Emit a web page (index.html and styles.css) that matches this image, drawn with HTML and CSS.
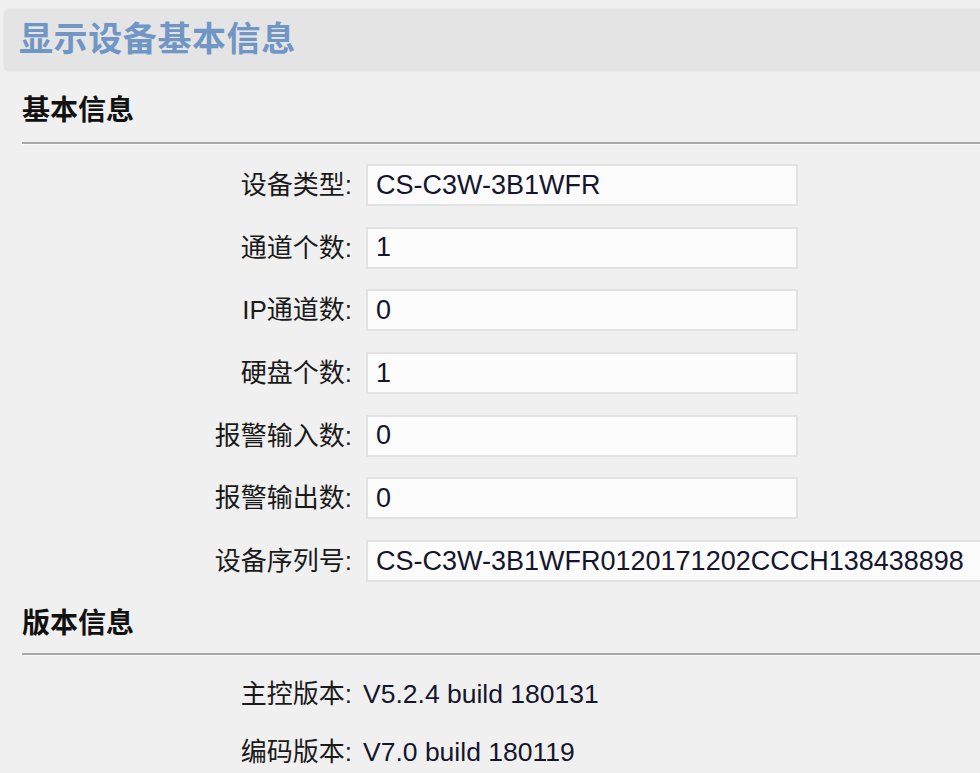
FILE: index.html
```html
<!DOCTYPE html>
<html lang="zh-CN">
<head>
  <meta charset="UTF-8">
  <meta name="viewport" content="width=device-width, initial-scale=1.0">
  <title>显示设备基本信息</title>
  <link rel="stylesheet" href="styles.css">
</head>
<body>
  <div class="page-title">显示设备基本信息</div>

  <div class="section">
    <h2 class="section-title">基本信息</h2>
    <div class="form">
      <label class="lbl" for="devType">设备类型:</label>
      <input class="txt" type="text" id="devType" value="CS-C3W-3B1WFR" readonly>

      <label class="lbl" for="chanNum">通道个数:</label>
      <input class="txt" type="text" id="chanNum" value="1" readonly>

      <label class="lbl" for="ipChan">IP通道数:</label>
      <input class="txt" type="text" id="ipChan" value="0" readonly>

      <label class="lbl" for="hddNum">硬盘个数:</label>
      <input class="txt" type="text" id="hddNum" value="1" readonly>

      <label class="lbl" for="alarmIn">报警输入数:</label>
      <input class="txt" type="text" id="alarmIn" value="0" readonly>

      <label class="lbl" for="alarmOut">报警输出数:</label>
      <input class="txt" type="text" id="alarmOut" value="0" readonly>

      <label class="lbl" for="serial">设备序列号:</label>
      <input class="txt txt-long" type="text" id="serial" value="CS-C3W-3B1WFR0120171202CCCH138438898" readonly>
    </div>
  </div>

  <div class="section">
    <h2 class="section-title">版本信息</h2>
    <div class="versions">
      <span class="lbl">主控版本:</span>
      <span class="val">V5.2.4 build 180131</span>

      <span class="lbl">编码版本:</span>
      <span class="val">V7.0 build 180119</span>
    </div>
  </div>
</body>
</html>
```

FILE: styles.css
```css
html {
  overflow: hidden;
}

body {
  margin: 0;
  padding: 8px 0 0 0;
  background-color: #f0f0f0;
  font-family: "Liberation Sans", Arial, "Noto Sans CJK SC", sans-serif;
  color: #111;
}

.page-title {
  margin-left: 3px;
  height: 64px;
  line-height: 55px;
  padding-left: 15px;
  background-color: #e4e4e4;
  border: 1px solid #e8e8e8;
  border-right: none;
  border-radius: 6px 0 0 6px;
  box-sizing: border-box;
  font-family: "Noto Sans CJK SC", sans-serif;
  font-size: 34px;
  font-weight: bold;
  color: #7096c6;
  letter-spacing: 0.6px;
}

.section-title {
  margin: 0 0 0 22px;
  height: 70px;
  line-height: 72px;
  font-family: "Noto Sans CJK SC", sans-serif;
  font-size: 28px;
  font-weight: bold;
  color: #111;
  border-bottom: 2px solid #a8a8a8;
  box-shadow: 0 1px 0 #fafafa;
}

.form {
  display: grid;
  grid-template-columns: 352px auto;
  column-gap: 14px;
  row-gap: 20.7px;
  justify-content: start;
  align-items: center;
  padding: 20px 0 0 0;
}

.lbl {
  text-align: right;
  font-size: 26px;
  line-height: 30px;
  color: #1a1a1a;
}

.txt {
  width: 432px;
  height: 42px;
  box-sizing: border-box;
  padding: 0 0 0 8px;
  margin: 0;
  border: 2px solid #e2e2e2;
  background-color: #fcfcfc;
  font-family: "Liberation Sans", Arial, sans-serif;
  font-size: 27px;
  color: #15152e;
  outline: none;
}

.txt-long {
  width: 640px;
}

.versions {
  display: grid;
  grid-template-columns: 352px auto;
  column-gap: 11px;
  row-gap: 27.5px;
  justify-content: start;
  padding: 24px 0 0 0;
}

.val {
  font-size: 26.5px;
  line-height: 30px;
  color: #15152e;
}

.section + .section .section-title {
  margin-top: 0;
  height: 71px;
  line-height: 78px;
}
```
